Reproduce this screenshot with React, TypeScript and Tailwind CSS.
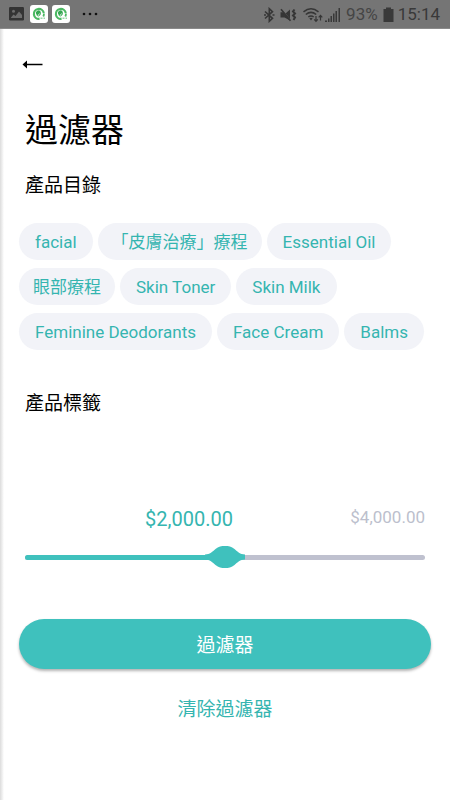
import { useState } from 'react';

const categories = [
  'facial',
  '「皮膚治療」療程',
  'Essential Oil',
  '眼部療程',
  'Skin Toner',
  'Skin Milk',
  'Feminine Deodorants',
  'Face Cream',
  'Balms',
];

const MAX_PRICE = 4000;

const formatPrice = (value: number) =>
  `$${value.toLocaleString('en-US', { minimumFractionDigits: 2 })}`;

// CJK glyphs carry their own side bearing, so those chips need less padding
const chipPadding = (label: string) => (/^[\x20-\x7e]+$/.test(label) ? 'px-4' : 'px-[14px]');

const AppBadge: React.FC = () => (
  <svg width="18" height="18" viewBox="0 0 18 18" fill="none">
    <rect width="18" height="18" rx="3" fill="#fff" />
    <path d="M9.500 13.900A5 5 0 1 1 13.800 8" stroke="#4cb963" strokeWidth="2.200" />
    <path d="M6.500 9.500A2.500 2.500 0 0 1 10.500 6.500C11.500 8.500 10.500 10.500 8.500 11.500Q6.500 11.500 6.500 9.500Z" fill="#36a852" />
    <path d="M7.500 11.500L9.500 8.500" stroke="#fff" strokeWidth=".8" />
    <path d="M13.900 8.500A5 5 0 0 1 13.300 11.500" stroke="#4cb963" strokeWidth="1.800" />
    <path d="M9.500 13.200h5.500" stroke="#9bd8a8" strokeWidth="1.500" strokeDasharray="1 .5" />
  </svg>
);

const StatusBar: React.FC = () => (
  <header className="flex h-[29px] items-center justify-between border-b border-[#8a8a8a] bg-[#757575] pr-[10px] pl-[9px] text-[17px] text-[#393939]">
    <div className="flex items-center gap-1">
      <svg className="mr-[2px]" width="15" height="14" viewBox="0 0 15 14">
        <rect width="15" height="13.500" rx="1.200" fill="#343434" />
        <path d="M2 10.500L4.500 7.500L6.500 9L10 4.500L13 8V11H2Z" fill="#6d6d6d" />
        <circle cx="4.500" cy="4.200" r="1.500" fill="#6d6d6d" />
      </svg>
      <AppBadge />
      <AppBadge />
      <svg className="ml-2" width="16" height="4" viewBox="0 0 16 4" fill="#111">
        <circle cx="2" cy="2" r="1.300" />
        <circle cx="8" cy="2" r="1.300" />
        <circle cx="14" cy="2" r="1.300" />
      </svg>
    </div>
    <div className="flex items-center pt-px">
      <svg width="12" height="16" viewBox="0 0 12 16" fill="none" stroke="#363636" strokeWidth="1.600">
        <path d="M2 4.500L9.500 11.300L6.300 14.300V1.700L9.500 4.700L2 11.500" />
        <path d="M1 8h2M9.500 8h2" />
      </svg>
      <svg className="ml-[5px]" width="17" height="16" viewBox="0 0 17 16" fill="none" stroke="#363636">
        <path fill="#363636" stroke="none" d="M.5 5.200H4L5.500 6.500L10 2.500V13.500L4.500 10.500H.5Z" />
        <path d="M2 2L10.500 13" stroke="#757575" strokeWidth=".6" />
        <path d="M1 2.200L10.500 13.700" strokeWidth="1.600" />
        <path d="M14.500 2.500l-1.500 2 2 2-2 2 2 2-1.500 2.500" strokeWidth="2" />
      </svg>
      <svg className="ml-[6px]" width="20" height="16" viewBox="0 0 20 16" fill="none" stroke="#363636">
        <path d="M.5 4.800Q8 -1.300 15.500 4.800M2.800 7.500Q8 3.200 13.200 7.500M5.300 10Q8 7.900 10.700 10" strokeWidth="1.500" />
        <path d="M6.300 11.300Q8 10 9.700 11.300L8 13.500Z" fill="#363636" stroke="none" />
        <path d="M13 9v5M11.200 12.300L13 14.300L14.800 12.300M17.500 13.500V8.500M15.700 10.300L17.500 8.300L19.300 10.300" strokeWidth="1.200" />
      </svg>
      <svg className="ml-[2px]" width="16" height="16" viewBox="0 0 16 16" fill="#393939">
        <path d="M0 13.500h2V15H0zM3 11.500h1.500V15H3zM5.500 9H7v6H5.500zM8 6.500h1.500V15H8zM10.500 4H12v11h-1.500zM13.500 1H15v14h-1.500z" />
      </svg>
      <span className="ml-[5px] pt-px text-[#454545]">93%</span>
      <svg className="ml-[5px]" width="11" height="16" viewBox="0 0 11 16" fill="#393939">
        <path d="M3 .5H8V2H10.500V15H.5V2H3Z" />
      </svg>
      <span className="ml-[4px] pt-px">15:14</span>
    </div>
  </header>
);

const PriceSlider: React.FC = () => {
  const [price, setPrice] = useState(2000);
  const percent = (price / MAX_PRICE) * 100;

  return (
    <div className="mx-[6px]">
      <div className="relative flex h-6 items-start justify-end">
        <output
          htmlFor="price"
          className="absolute top-0 -translate-x-1/2 text-[20px] leading-6 text-[#35b5b0]"
          style={{ left: `${Math.min(Math.max(percent, 12), 88) - 9}%` }}
        >
          {formatPrice(price)}
        </output>
        <span className="text-[17px] leading-5 text-[#bcbfcd]">{formatPrice(MAX_PRICE)}</span>
      </div>
      <div className="relative mt-[14px] flex h-6 items-center">
        <div className="h-[5px] w-full overflow-hidden rounded-full bg-[#bfc1cf]">
          <div className="h-full bg-[#3fc1bd]" style={{ width: `${percent}%` }} />
        </div>
        <svg
          className="absolute -translate-x-1/2"
          style={{ left: `${percent}%` }}
          width="40"
          height="24"
          viewBox="0 0 40 24"
          fill="#3fc1bd"
        >
          <path d="M0 9.500C5 9.500 7.500 6.500 10.500 4C13.500 1.500 16.500 1 20 1S26.500 1.500 29.500 4C32.500 6.500 35 9.500 40 9.500V14.500C35 14.500 32.500 17.500 29.500 20C26.500 22.500 23.500 23 20 23S13.500 22.500 10.500 20C7.500 17.500 5 14.500 0 14.500Z" />
        </svg>
        <input
          id="price"
          type="range"
          aria-label="價格"
          min={0}
          max={MAX_PRICE}
          step={50}
          value={price}
          onChange={(e) => setPrice(Number(e.target.value))}
          className="absolute inset-0 w-full cursor-pointer opacity-0"
        />
      </div>
    </div>
  );
};

const App: React.FC = () => {
  return (
    <div className="min-h-screen bg-white font-[Roboto,'Noto_Sans_CJK_TC',sans-serif] text-black">
      <StatusBar />
      <div className="flex min-h-[calc(100vh-29px)]">
        <div className="w-1 shrink-0 bg-linear-to-r from-[#dcdcdc] to-white" />
        <main className="min-w-0 flex-1 pt-[25px] pr-[19px] pb-10 pl-[15px]">
          <button type="button" aria-label="返回" className="ml-[3px] flex h-5 items-center">
            <svg width="21" height="10" viewBox="0 0 21 10" fill="none" stroke="#000">
              <path d="M3 5.500H20.500" strokeWidth="1.500" />
              <path d="M.5 5.500L5 1.500V9.500Z" fill="#000" stroke="none" />
            </svg>
          </button>
          <h1 className="mt-[37px] ml-[6px] text-[33px] leading-10">過濾器</h1>
          <h2 className="mt-[23px] ml-[6px] text-[19px] leading-6">產品目錄</h2>
          <div className="mt-[25px] flex flex-wrap gap-x-[5px] gap-y-2">
            {categories.map((category) => (
              <button
                key={category}
                type="button"
                className={`h-[37px] rounded-full bg-[#f2f3f8] pt-[2px] text-[17px] text-[#35b5b0] ${chipPadding(category)}`}
              >
                {category}
              </button>
            ))}
          </div>
          <h2 className="mt-[42px] mb-[91px] ml-[6px] text-[19px] leading-6">產品標籤</h2>
          <PriceSlider />
          <button
            type="button"
            className="mt-[50px] h-[50px] w-full rounded-full bg-[#3fc1bd] pt-1 text-[19px] text-white shadow-[0_2px_3px_rgba(0,0,0,0.3)]"
          >
            過濾器
          </button>
          <button type="button" className="mx-auto mt-[29px] block text-[19px] leading-6 text-[#35b5b0]">
            清除過濾器
          </button>
        </main>
      </div>
    </div>
  );
};

export default App;
